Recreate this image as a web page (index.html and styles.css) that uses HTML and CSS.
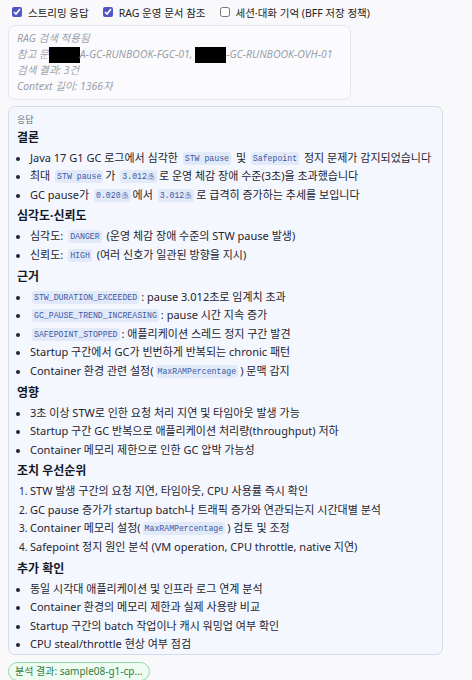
FILE: index.html
```html
<!DOCTYPE html>
<html lang="ko">
  <head>
    <meta charset="UTF-8" />
    <meta name="viewport" content="width=device-width, initial-scale=1.0" />
    <title>GC 로그 분석</title>
    <link rel="stylesheet" href="styles.css">
  </head>
  <body>
    <!-- Options -->
    <div class="opts">
      <label><input type="checkbox" checked />스트리밍 응답</label>
      <label><input type="checkbox" checked />RAG 운영 문서 참조</label>
      <label><input type="checkbox" />세션·대화 기억 (BFF 저장 정책)</label>
    </div>

    <!-- RAG meta -->
    <div class="rag-note">
      <div>RAG 검색 적용됨</div>
      <div>참고 문<span class="redact">서: OOOO</span>A-GC-RUNBOOK-FGC-01, <span class="redact">OOOO</span>-GC-RUNBOOK-OVH-01</div>
      <div>검색 결과: 3건</div>
      <div>Context 길이: 1366자</div>
    </div>

    <!-- Answer -->
    <section class="answer">
      <div class="answer-label">응답</div>
      <div class="md">
        <h4>결론</h4>
        <ul>
          <li>Java 17 G1 GC 로그에서 심각한 <code>STW pause</code> 및 <code>Safepoint</code> 정지 문제가 감지되었습니다</li>
          <li>최대 <code>STW pause</code>가 <code>3.012초</code>로 운영 체감 장애 수준(3초)을 초과했습니다</li>
          <li>GC pause가 <code>0.020초</code>에서 <code>3.012초</code>로 급격히 증가하는 추세를 보입니다</li>
        </ul>
        <h4>심각도·신뢰도</h4>
        <ul>
          <li>심각도: <code>DANGER</code> (운영 체감 장애 수준의 STW pause 발생)</li>
          <li>신뢰도: <code>HIGH</code> (여러 신호가 일관된 방향을 지시)</li>
        </ul>
        <h4>근거</h4>
        <ul>
          <li><code>STW_DURATION_EXCEEDED</code>: pause 3.012초로 임계치 초과</li>
          <li><code>GC_PAUSE_TREND_INCREASING</code>: pause 시간 지속 증가</li>
          <li><code>SAFEPOINT_STOPPED</code>: 애플리케이션 스레드 정지 구간 발견</li>
          <li>Startup 구간에서 GC가 빈번하게 반복되는 chronic 패턴</li>
          <li>Container 환경 관련 설정(<code>MaxRAMPercentage</code>) 문맥 감지</li>
        </ul>
        <h4>영향</h4>
        <ul>
          <li>3초 이상 STW로 인한 요청 처리 지연 및 타임아웃 발생 가능</li>
          <li>Startup 구간 GC 반복으로 애플리케이션 처리량(throughput) 저하</li>
          <li>Container 메모리 제한으로 인한 GC 압박 가능성</li>
        </ul>
        <h4>조치 우선순위</h4>
        <ol>
          <li>STW 발생 구간의 요청 지연, 타임아웃, CPU 사용률 즉시 확인</li>
          <li>GC pause 증가가 startup batch나 트래픽 증가와 연관되는지 시간대별 분석</li>
          <li>Container 메모리 설정(<code>MaxRAMPercentage</code>) 검토 및 조정</li>
          <li>Safepoint 정지 원인 분석 (VM operation, CPU throttle, native 지연)</li>
        </ol>
        <h4>추가 확인</h4>
        <ul>
          <li>동일 시각대 애플리케이션 및 인프라 로그 연계 분석</li>
          <li>Container 환경의 메모리 제한과 실제 사용량 비교</li>
          <li>Startup 구간의 batch 작업이나 캐시 워밍업 여부 확인</li>
          <li>CPU steal/throttle 현상 여부 점검</li>
        </ul>
      </div>
    </section>

    <span class="result-chip">분석 결과: sample08-g1-cp...</span>
  </body>
</html>
```

FILE: styles.css
```css
:root{--text:#1f2430;--muted:#9aa0aa;--accent:#4f56c2;--code-bg:#e2e9f9;--code-fg:#3c5aa6}
*{box-sizing:border-box;margin:0;padding:0}
body{background:#f9f9fb;color:var(--text);font-family:"Noto Sans","Noto Sans CJK KR",sans-serif;font-size:11px;padding:4px 8px 0;overflow:hidden}

.opts{display:flex;align-items:center;gap:14px;padding-left:4px;height:16px;font-size:10.5px}
.opts label{display:flex;align-items:center;gap:6px;color:#222}
.opts input{width:10px;height:10px;accent-color:var(--accent);margin:0}

.rag-note{width:343px;margin-top:5px;padding:5px 4px 4px 8px;background:#fbfbfd;border:1px solid #e4e6ec;border-radius:7px;font-style:italic;font-size:10.5px;color:var(--muted);line-height:15.8px;white-space:nowrap}
.redact{display:inline-block;vertical-align:middle;width:31px;height:16px;background:#000;color:#000;overflow:hidden}

.answer{width:435px;margin-top:6px;padding:7px 8px 0;background:#f4f7fe;border:1px solid #d5dbea;border-radius:7px}
.answer-label{font-size:9px;line-height:12px;color:#6b7280}
.md h4{font-size:12px;font-weight:700;line-height:23px;color:#111827}
.md ul,.md ol{padding-left:13px;line-height:18.6px}
.md ul{list-style:disc}
.md li::marker{font-size:10px}
code{display:inline-block;font-family:"Liberation Mono",monospace;font-size:8.2px;line-height:13px;color:var(--code-fg);background:var(--code-bg);padding:0 2px;margin:0 2px;border-radius:3px;vertical-align:1px}

.result-chip{display:inline-block;margin-top:7px;padding:1px 6px;border:1px solid #8fdca8;background:#eefcf2;color:#2e7d44;border-radius:10px;font-size:10px;line-height:15px}
```
